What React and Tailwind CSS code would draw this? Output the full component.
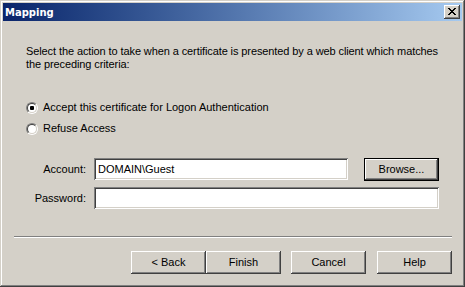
import React from "react";

// Classic 3D bevels
const raised =
  "shadow-[inset_-1px_-1px_#404040,inset_1px_1px_#ffffff,inset_-2px_-2px_#808080,inset_2px_2px_#d4d0c8]";
const sunken =
  "shadow-[inset_1px_1px_#808080,inset_-1px_-1px_#ffffff,inset_2px_2px_#404040,inset_-2px_-2px_#d4d0c8]";

function Button({ children, isDefault, className = "" }) {
  if (isDefault) {
    return (
      <div className={`border border-black bg-[#d4d0c8] ${className}`}>
        <div
          className={`h-full w-full flex items-center justify-center ${raised}`}
        >
          {children}
        </div>
      </div>
    );
  }
  return (
    <div
      className={`bg-[#d4d0c8] flex items-center justify-center ${raised} ${className}`}
    >
      {children}
    </div>
  );
}

function Radio({ checked, label, className = "" }) {
  return (
    <div className={`flex items-center h-[13px] ${className}`}>
      <div className="w-[12px] h-[12px] rounded-full border border-t-[#808080] border-l-[#808080] border-r-white border-b-white">
        <div className="w-[10px] h-[10px] rounded-full border border-t-[#404040] border-l-[#404040] border-r-[#d4d0c8] border-b-[#d4d0c8] bg-white flex items-center justify-center">
          {checked && <div className="w-[4px] h-[4px] bg-black rounded-[1px]" />}
        </div>
      </div>
      <span className="ml-[5px]">{label}</span>
    </div>
  );
}

function CloseGlyph() {
  const pixels = [
    [0, 0], [1, 0], [6, 0], [7, 0],
    [1, 1], [2, 1], [5, 1], [6, 1],
    [2, 2], [3, 2], [4, 2], [5, 2],
    [3, 3], [4, 3],
    [2, 4], [3, 4], [4, 4], [5, 4],
    [1, 5], [2, 5], [5, 5], [6, 5],
    [0, 6], [1, 6], [6, 6], [7, 6],
  ];
  return (
    <svg width="8" height="7" viewBox="0 0 8 7" shapeRendering="crispEdges">
      {pixels.map(([x, y]) => (
        <rect key={`${x}-${y}`} x={x} y={y} width="1" height="1" fill="#000" />
      ))}
    </svg>
  );
}

export default function App() {
  return (
    <div
      className="w-[465px] h-[287px] bg-[#d4d0c8] p-[3px] flex flex-col text-[11px] leading-[13px] text-black font-['Liberation_Sans',Arial,sans-serif] shadow-[inset_-1px_-1px_#404040,inset_1px_1px_#d4d0c8,inset_-2px_-2px_#808080,inset_2px_2px_#ffffff]"
    >
      {/* Title bar */}
      <div className="h-[18px] flex items-center justify-between bg-linear-to-r from-[#0a246a] to-[#a6caf0]">
        <span className="pl-[2px] text-white font-bold text-[10px] font-['DejaVu_Sans',sans-serif]">
          Mapping
        </span>
        <div
          className={`w-[16px] h-[14px] mr-[2px] bg-[#d4d0c8] flex items-start justify-start pl-[4px] pt-[3px] ${raised}`}
        >
          <CloseGlyph />
        </div>
      </div>

      {/* Body */}
      <p className="mt-[24px] pl-[23px] whitespace-nowrap tracking-[-0.1px]">
        Select the action to take when a certificate is presented by a web
        client which matches
        <br />
        the preceding criteria:
      </p>

      <Radio
        checked
        label="Accept this certificate for Logon Authentication"
        className="mt-[30px] ml-[23px]"
      />
      <Radio label="Refuse Access" className="mt-[8px] ml-[23px]" />

      {/* Account */}
      <div className="mt-[23px] flex items-start h-[23px]">
        <div className="w-[83px] h-[22px] flex items-center justify-end">
          Account:
        </div>
        <div
          className={`ml-[8px] w-[254px] h-[22px] bg-white flex items-center pl-[4px] ${sunken}`}
        >
          DOMAIN\Guest
        </div>
        <Button isDefault className="ml-[16px] w-[75px] h-[23px]">
          Browse...
        </Button>
      </div>

      {/* Password */}
      <div className="mt-[6px] flex items-center h-[22px]">
        <div className="w-[83px] text-right">Password:</div>
        <div className={`ml-[8px] w-[345px] h-[22px] bg-white ${sunken}`} />
      </div>

      {/* Separator */}
      <div className="mt-[27px] ml-[11px] w-[438px]">
        <div className="h-px bg-[#808080]" />
        <div className="h-px bg-white" />
      </div>

      {/* Buttons */}
      <div className="mt-[13px] flex justify-end pr-[10px]">
        <Button className="w-[75px] h-[23px]">&lt; Back</Button>
        <Button className="w-[75px] h-[23px]">Finish</Button>
        <Button className="ml-[10px] w-[75px] h-[23px]">Cancel</Button>
        <Button className="ml-[11px] w-[75px] h-[23px]">Help</Button>
      </div>
    </div>
  );
}
